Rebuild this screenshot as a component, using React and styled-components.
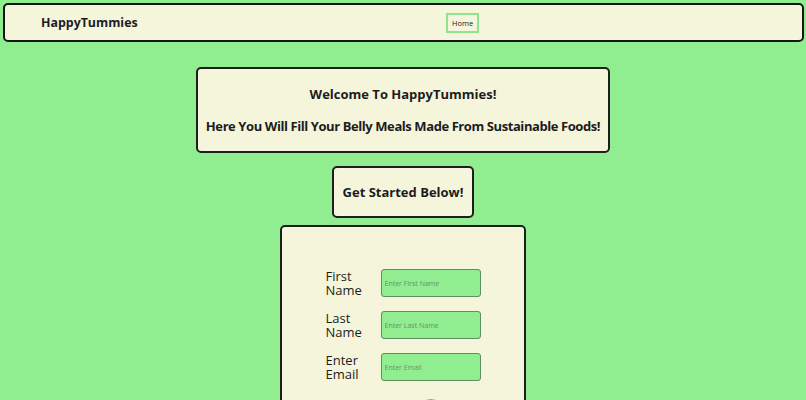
import styled, { createGlobalStyle } from 'styled-components';

// ─── GLOBAL ───
const GlobalStyle = createGlobalStyle`
    body {
        margin: 0;
        background: #90ee90;
        font-family: "Open Sans", "Liberation Sans", sans-serif;
        color: #1c1c1c;
    }
`;

// ─── NAV ───
const Nav = styled.nav`
    margin: 3px 2px 0 3px;
    height: 35px;
    display: flex;
    align-items: center;
    background: #f5f5dc;
    border: 2px solid #161616;
    border-radius: 5px;
    padding-left: 36px;
`;

const Brand = styled.h1`
    margin: 0;
    width: 405px;
    font-size: 12.4px;
    font-weight: 700;
`;

const NavButton = styled.button`
    height: 20px;
    padding: 0 4px;
    background: #f5f5dc;
    border: 2px solid #8fe48f;
    font-family: inherit;
    font-size: 7.5px;
    color: #222;
    cursor: pointer;
`;

// ─── MAIN ───
const Main = styled.main`
    display: flex;
    flex-direction: column;
    align-items: center;
`;

const Card = styled.section`
    box-sizing: border-box;
    background: #f5f5dc;
    border: 2px solid #1e1e1e;
    border-radius: 5px;
    width: ${p => p.$width};
    margin-top: ${p => p.$top};
    text-align: center;
`;

const Heading = styled.h2`
    margin: 0;
    font-size: 13px;
    font-weight: 700;
    line-height: 18px;
    white-space: nowrap;
    letter-spacing: ${p => (p.$tight ? '-0.42px' : 'normal')};
`;

const WelcomeCard = styled(Card)`
    height: 86px;
    padding-top: 16px;
    display: flex;
    flex-direction: column;
    gap: 14px;
`;

const StartCard = styled(Card)`
    height: 52px;
    display: flex;
    align-items: center;
    justify-content: center;
`;

// ─── FORM ───
const FormCard = styled(Card)`
    height: 240px;
    padding-top: 42px;
    display: flex;
    flex-direction: column;
    gap: 14px;
`;

const Row = styled.label`
    display: grid;
    grid-template-columns: 55px 100px;
    justify-content: center;
    align-items: center;
    justify-items: ${p => (p.$center ? 'center' : 'start')};
    text-align: left;
`;

const FieldLabel = styled.span`
    width: 42px;
    justify-self: start;
    font-size: 13px;
    line-height: 14px;
    padding-top: ${p => p.$drop || '0'};
`;

const Input = styled.input`
    box-sizing: border-box;
    width: 100px;
    height: 28px;
    background: #90ee90;
    border: 1px solid #5f8f5f;
    border-radius: 3px;
    padding: 0 3px;
    font-family: inherit;
    font-size: 7px;

    &::placeholder {
        color: #6b8f6b;
    }
`;

const Toggle = styled.input`
    appearance: none;
    margin: 0;
    width: 24px;
    height: 24px;
    border-radius: 50%;
    background: #fff;
    border: 1px solid #9a9a9a;
`;

const fields = [
    ['First Name', 'Enter First Name'],
    ['Last Name', 'Enter Last Name'],
    ['Enter Email', 'Enter Email'],
];

export default function App() {
    return (
        <>
            <GlobalStyle />
            <Nav>
                <Brand>HappyTummies</Brand>
                <NavButton>Home</NavButton>
            </Nav>
            <Main>
                <WelcomeCard $width="414px" $top="25px">
                    <Heading>Welcome To HappyTummies!</Heading>
                    <Heading $tight>Here You Will Fill Your Belly Meals Made From Sustainable Foods!</Heading>
                </WelcomeCard>
                <StartCard $width="142px" $top="13px">
                    <Heading>Get Started Below!</Heading>
                </StartCard>
                <FormCard $width="246px" $top="7px">
                    {fields.map(([label, placeholder]) => (
                        <Row key={label}>
                            <FieldLabel>{label}</FieldLabel>
                            <Input placeholder={placeholder} />
                        </Row>
                    ))}
                    <Row $center>
                        <FieldLabel $drop="4px">Meal Plan</FieldLabel>
                        <Toggle type="checkbox" />
                    </Row>
                </FormCard>
            </Main>
        </>
    );
}
